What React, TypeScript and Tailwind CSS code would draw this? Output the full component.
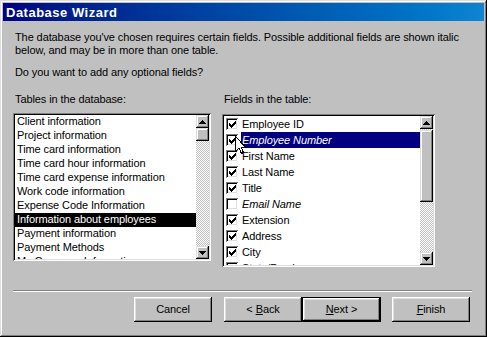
import React from "react";

const raised =
  "shadow-[inset_-1px_-1px_#000,inset_1px_1px_#fff,inset_-2px_-2px_#808080,inset_2px_2px_#dfdfdf]";
const raisedSb =
  "shadow-[inset_-1px_-1px_#000,inset_1px_1px_#dfdfdf,inset_-2px_-2px_#808080,inset_2px_2px_#fff]";
const sunken =
  "shadow-[inset_1px_1px_#808080,inset_-1px_-1px_#fff,inset_2px_2px_#000,inset_-2px_-2px_#dfdfdf]";
const checker =
  "bg-[image:repeating-conic-gradient(#c0c0c0_0_25%,#ffffff_0_50%)] bg-[length:2px_2px]";

function Arrow({ up }: { up: boolean }) {
  return (
    <svg width="7" height="4" viewBox="0 0 7 4" shapeRendering="crispEdges">
      {up ? (
        <path d="M3 0h1v1h1v1h1v1h1v1H0V3h1V2h1V1h1z" fill="#000" />
      ) : (
        <path d="M0 0h7v1H6v1H5v1H4v1H3V3H2V2H1V1H0z" fill="#000" />
      )}
    </svg>
  );
}

function SbButton({ up }: { up: boolean }) {
  return (
    <div className={`h-[13px] w-[13px] bg-[#c0c0c0] ${raisedSb} flex items-center justify-center`}>
      <Arrow up={up} />
    </div>
  );
}

function Scrollbar({ thumbTop, thumbH }: { thumbTop: number; thumbH: number }) {
  return (
    <div className={`w-[13px] flex flex-col ${checker}`}>
      <SbButton up />
      <div className="flex-1 relative">
        <div
          className={`absolute left-0 w-[13px] bg-[#c0c0c0] ${raisedSb}`}
          style={{ top: thumbTop, height: thumbH }}
        />
      </div>
      <SbButton up={false} />
    </div>
  );
}

function Check({ checked }: { checked: boolean }) {
  return (
    <div className={`w-[12px] h-[12px] bg-white ${sunken} flex items-center justify-center`}>
      {checked && (
        <svg width="7" height="7" viewBox="0 0 7 7" shapeRendering="crispEdges">
          <path
            d="M6 0h1v3H6v1H5v1H4v1H3v1H2V6H1V5H0V2h1v1h1v1h1V3h1V2h1V1h1z"
            fill="#000"
          />
        </svg>
      )}
    </div>
  );
}

const tables = [
  "Client information",
  "Project information",
  "Time card information",
  "Time card hour information",
  "Time card expense information",
  "Work code information",
  "Expense Code Information",
  "Information about employees",
  "Payment information",
  "Payment Methods",
  "My Company Information",
];

const fields: { name: string; checked: boolean; italic?: boolean; sel?: boolean }[] = [
  { name: "Employee ID", checked: true },
  { name: "Employee Number", checked: true, italic: true, sel: true },
  { name: "First Name", checked: true },
  { name: "Last Name", checked: true },
  { name: "Title", checked: true },
  { name: "Email Name", checked: false, italic: true },
  { name: "Extension", checked: true },
  { name: "Address", checked: true },
  { name: "City", checked: true },
  { name: "State/Province", checked: true },
];

function Btn({ children, def, w = 78 }: { children: React.ReactNode; def?: boolean; w?: number }) {
  if (def) {
    return (
      <div className="h-[25px] border border-black" style={{ width: w }}>
        <div className={`h-full w-full bg-[#c0c0c0] ${raised} flex items-center justify-center`}>
          {children}
        </div>
      </div>
    );
  }
  return (
    <div
      className={`h-[25px] bg-[#c0c0c0] ${raised} flex items-center justify-center`}
      style={{ width: w }}
    >
      {children}
    </div>
  );
}

export default function App() {
  return (
    <div
      className="w-[487px] h-[337px] bg-[#c0c0c0] p-[3px] relative overflow-hidden text-[11px] tracking-[-0.1px] text-black shadow-[inset_-1px_-1px_#000,inset_1px_1px_#dfdfdf,inset_-2px_-2px_#808080,inset_2px_2px_#fff]"
      style={{ fontFamily: '"Liberation Sans", Arial, sans-serif' }}
    >
      <div className="h-[18px] bg-gradient-to-r from-[#000080] to-[#1084d0] flex items-center pl-[3px]">
        <span className="text-white font-bold text-[13px] tracking-[0.5px] leading-none">Database Wizard</span>
      </div>

      <div className="pl-[10px]">
        <div className="ml-[2px] mt-[10px] leading-[13px]">
          The database you've chosen requires certain fields. Possible additional fields are shown italic
          <br />
          below, and may be in more than one table.
        </div>
        <div className="ml-[2px] mt-[9px] leading-[13px]">Do you want to add any optional fields?</div>

        <div className="flex items-start gap-[11px] mt-[14px]">
          <div className="w-[198px] flex flex-col">
            <div className="ml-[2px] leading-[13px]">Tables in the database:</div>
            <div className={`mt-[7px] h-[148px] p-[2px] flex bg-white ${sunken}`}>
              <div className="flex-1 overflow-hidden bg-white">
                {tables.map((t, i) => (
                  <div
                    key={t}
                    className={`h-[14px] leading-[13px] pl-[2px] whitespace-nowrap ${
                      i === 7 ? "bg-black text-white" : ""
                    }`}
                  >
                    {t}
                  </div>
                ))}
              </div>
              <Scrollbar thumbTop={0} thumbH={13} />
            </div>
          </div>

          <div className="w-[213px] flex flex-col">
            <div className="ml-[2px] leading-[13px]">Fields in the table:</div>
            <div className={`mt-[8px] h-[153px] p-[2px] flex bg-white ${sunken}`}>
              <div className="flex-1 overflow-hidden bg-white">
                {fields.map((f) => (
                  <div key={f.name} className="h-[16px] flex items-center">
                    <div className="ml-[2px] mr-[3px]">
                      <Check checked={f.checked} />
                    </div>
                    <div
                      className={`flex-1 h-[16px] leading-[16px] pl-[1px] whitespace-nowrap ${
                        f.italic ? "italic" : ""
                      } ${f.sel ? "bg-[#000080] text-white" : ""}`}
                    >
                      {f.name}
                    </div>
                  </div>
                ))}
              </div>
              <Scrollbar thumbTop={1} thumbH={72} />
            </div>
          </div>
        </div>

        <div className="mt-[23px] mr-[12px] h-[2px] border-t border-t-[#808080] border-b border-b-white" />

        <div className="flex mt-[5px] pl-[121px]">
          <Btn>Cancel</Btn>
          <div className="w-[12px]" />
          <Btn>
            &lt; <span className="underline ml-[3px]">B</span>ack
          </Btn>
          <Btn def w={79}>
            <span className="underline">N</span>ext &gt;
          </Btn>
          <div className="w-[11px]" />
          <Btn>
            <span className="underline">F</span>inish
          </Btn>
        </div>
      </div>

      <svg
        className="absolute left-[235px] top-[136px]"
        width="12"
        height="19"
        viewBox="0 0 12 19"
        shapeRendering="crispEdges"
      >
        <path d="M0.5 0.5 L0.5 15.5 L4 12 L6.5 17.5 L8.5 16.5 L6 11 L10.5 11 Z" fill="#fff" stroke="#000" strokeWidth="1" />
      </svg>
    </div>
  );
}
